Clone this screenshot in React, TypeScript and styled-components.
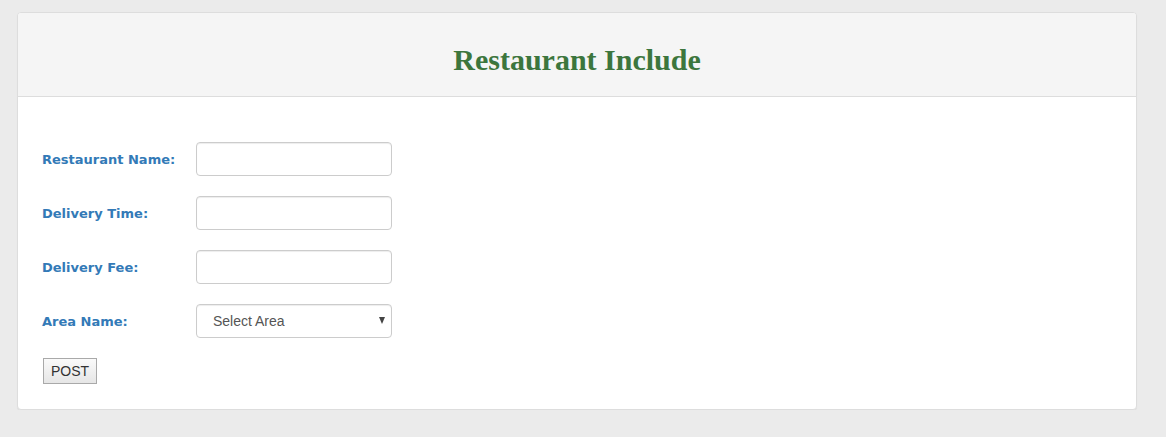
import React from "react";
import styled, { createGlobalStyle } from "styled-components";

const Global = createGlobalStyle`
  html, body { margin: 0; padding: 0; background: #ebebeb; }
  body { font-family: "Liberation Sans", Arial, sans-serif; font-size: 14px; }
`;

const Page = styled.div`
  padding: 12px 29px 0 17px;
`;

const Panel = styled.div`
  background: #fff;
  border: 1px solid #dddddd;
  border-radius: 4px;
  box-shadow: 0 1px 1px rgba(0, 0, 0, 0.05);
  box-sizing: border-box;
  height: 398px;
  overflow: hidden;
`;

const Header = styled.div`
  background: #f5f5f5;
  border-bottom: 1px solid #dddddd;
  height: 84px;
  box-sizing: border-box;
  display: flex;
  align-items: center;
  justify-content: center;
`;

const Title = styled.h2`
  margin: 0;
  font-family: "Liberation Serif", "Times New Roman", serif;
  font-weight: bold;
  font-size: 30px;
  color: #3c763d;
  padding-top: 10px;
`;

const Body = styled.form`
  padding: 45px 24px 0 24px;
  display: flex;
  flex-direction: column;
  gap: 20px;
`;

const Row = styled.div`
  display: flex;
  align-items: center;
`;

const Label = styled.label`
  width: 154px;
  font-family: "DejaVu Sans", sans-serif;
  font-weight: bold;
  font-size: 13px;
  color: #337ab7;
`;

const Input = styled.input`
  width: 196px;
  height: 34px;
  box-sizing: border-box;
  border: 1px solid #cccccc;
  border-radius: 4px;
  padding: 6px 12px;
  font-size: 14px;
  color: #555;
  background: #fff;
  box-shadow: inset 0 1px 1px rgba(0, 0, 0, 0.075);
`;

const SelectWrap = styled.div`
  position: relative;
  width: 196px;
  height: 34px;
`;

const Select = styled.select`
  appearance: none;
  width: 196px;
  height: 34px;
  box-sizing: border-box;
  border: 1px solid #cccccc;
  border-radius: 4px;
  padding: 6px 16px;
  font-family: "Liberation Sans", Arial, sans-serif;
  font-size: 14px;
  color: #555;
  background: #fff;
  box-shadow: inset 0 1px 1px rgba(0, 0, 0, 0.075);
`;

const Arrow = styled.span`
  position: absolute;
  right: 7px;
  top: 13px;
  width: 0;
  height: 0;
  border-left: 3.5px solid transparent;
  border-right: 3.5px solid transparent;
  border-top: 7px solid #444;
  pointer-events: none;
`;

const Button = styled.button`
  align-self: flex-start;
  margin-left: 1px;
  width: 54px;
  height: 26px;
  box-sizing: border-box;
  font-family: "Liberation Sans", Arial, sans-serif;
  font-size: 14px;
  color: #333;
  background: linear-gradient(#fafafa, #e6e6e6);
  border: 1px solid #a9a9a9;
  border-radius: 0;
  padding: 0;
`;

export default function App() {
  return (
    <>
      <Global />
      <Page>
        <Panel>
          <Header>
            <Title>Restaurant Include</Title>
          </Header>
          <Body>
            <Row>
              <Label>Restaurant Name:</Label>
              <Input type="text" />
            </Row>
            <Row>
              <Label>Delivery Time:</Label>
              <Input type="text" />
            </Row>
            <Row>
              <Label>Delivery Fee:</Label>
              <Input type="text" />
            </Row>
            <Row>
              <Label>Area Name:</Label>
              <SelectWrap>
                <Select defaultValue="">
                  <option value="">Select Area</option>
                </Select>
                <Arrow />
              </SelectWrap>
            </Row>
            <Button type="button">POST</Button>
          </Body>
        </Panel>
      </Page>
    </>
  );
}
